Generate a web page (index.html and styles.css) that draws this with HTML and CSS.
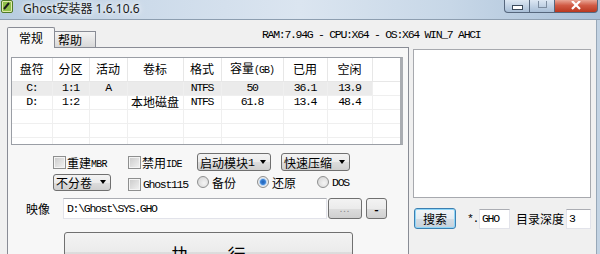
FILE: index.html
```html
<!DOCTYPE html>
<html lang="zh-CN">
  <head>
    <meta charset="UTF-8" />
    <title>Ghost安装器 1.6.10.6</title>
    <link rel="stylesheet" href="styles.css">
  </head>
  <body>
    <!-- Barre de titre -->
    <div class="titlebar">
      <svg class="app-icon" viewBox="0 0 14 14">
        <rect x="1.5" y="0.5" width="11" height="12" rx="1.5" fill="#dfeaa8" stroke="#4f7a28" />
        <rect x="3" y="2" width="8" height="9" fill="#8fc04a" />
        <path d="M4 9 L9 3" stroke="#1d1d1d" stroke-width="2" />
      </svg>
      <span class="title">Ghost安装器 1.6.10.6</span>
      <div class="caption">
        <span class="cap cap-min"><i class="min-glyph"></i></span>
        <span class="cap cap-max"><i class="max-glyph"></i></span>
        <span class="cap cap-close">
          <svg viewBox="0 0 12 9" class="close-glyph">
            <path d="M2 0 L10 8 M10 0 L2 8" stroke="#fff" stroke-width="2.2" />
          </svg>
        </span>
      </div>
    </div>

    <div class="client">
      <!-- Onglets -->
      <div class="tabstrip">
        <span class="tab active">常规</span>
        <span class="tab idle">帮助</span>
        <span class="sysinfo mono">RAM:7.94G - CPU:X64 - OS:X64 WIN_7 AHCI</span>
      </div>

      <div class="main">
        <div class="panel">
          <!-- Liste des partitions -->
          <div class="listview">
            <table class="disks">
              <colgroup>
                <col style="width: 40px" />
                <col style="width: 37px" />
                <col style="width: 38px" />
                <col style="width: 56px" />
                <col style="width: 38px" />
                <col style="width: 62px" />
                <col style="width: 44px" />
                <col style="width: 45px" />
                <col style="width: 28px" />
              </colgroup>
              <tr class="head">
                <th>盘符</th>
                <th>分区</th>
                <th>活动</th>
                <th>卷标</th>
                <th>格式</th>
                <th>容量<span class="mono small">(GB)</span></th>
                <th>已用</th>
                <th>空闲</th>
                <th></th>
              </tr>
              <tr class="sel mono">
                <td>C:</td>
                <td>1:1</td>
                <td>A</td>
                <td></td>
                <td>NTFS</td>
                <td>50</td>
                <td>36.1</td>
                <td>13.9</td>
                <td></td>
              </tr>
              <tr class="mono">
                <td>D:</td>
                <td>1:2</td>
                <td></td>
                <td class="cjk">本地磁盘</td>
                <td>NTFS</td>
                <td>61.8</td>
                <td>13.4</td>
                <td>48.4</td>
                <td></td>
              </tr>
              <tr><td></td><td></td><td></td><td></td><td></td><td></td><td></td><td></td><td></td></tr>
              <tr><td></td><td></td><td></td><td></td><td></td><td></td><td></td><td></td><td></td></tr>
              <tr><td></td><td></td><td></td><td></td><td></td><td></td><td></td><td></td><td></td></tr>
            </table>
          </div>

          <!-- Options -->
          <div class="options">
            <label class="opt"><i class="check"></i><span>重建</span><span class="mono tiny">MBR</span></label>
            <label class="opt"><i class="check"></i><span>禁用</span><span class="mono tiny">IDE</span></label>
            <div class="combos">
              <span class="combo w-boot">启动模块<span class="mono">1</span></span>
              <span class="combo w-zip">快速压缩</span>
            </div>

            <span class="combo w-split">不分卷</span>
            <label class="opt g115"><i class="check"></i><span class="mono">Ghost115</span></label>
            <div class="radios">
              <label class="opt"><i class="radio"></i>备份</label>
              <label class="opt"><i class="radio on"></i>还原</label>
              <label class="opt"><i class="radio"></i><span class="mono">DOS</span></label>
            </div>
          </div>

          <div class="image-row">
            <span class="img-label">映像</span>
            <span class="edit path mono">D:\Ghost\SYS.GHO</span>
            <button class="btn browse">...</button>
            <button class="btn minus">-</button>
          </div>

          <button class="btn run"><span>执</span><span>行</span></button>
        </div>

        <!-- Recherche -->
        <div class="side">
          <div class="results"></div>
          <div class="search-row">
            <button class="btn search">搜索</button>
            <span class="mask mono">*.</span>
            <span class="edit ext mono">GHO</span>
            <span class="depth-label">目录深度</span>
            <span class="edit depth mono">3</span>
          </div>
        </div>
      </div>
    </div>
  </body>
</html>
```

FILE: styles.css
```css
* {
  margin: 0;
  padding: 0;
  box-sizing: border-box;
}

body {
  width: 600px;
  height: 254px;
  overflow: hidden;
  background-color: #c3d3e3;
  font-family: "Noto Sans CJK SC", sans-serif;
  font-size: 12px;
  color: #000;
}

.mono {
  font-family: "Liberation Mono", "Noto Sans CJK SC", monospace;
  font-size: 11.5px;
  letter-spacing: -1.3px;
}

.mono.small {
  font-size: 10px;
  letter-spacing: -1px;
}

.mono.tiny {
  font-size: 10px;
  letter-spacing: -0.8px;
  line-height: 12px;
  margin-top: 6px;
}

/* Barre de titre */
.titlebar {
  display: flex;
  align-items: flex-start;
  height: 20px;
  background: linear-gradient(90deg, #b7cce0 0%, #cddbea 25%, #dbe5f0 50%, #c7d7e7 75%, #a9c0d8 100%);
  border-bottom: 1px solid #8d9eb0;
}

.app-icon {
  width: 14px;
  height: 14px;
}

.title {
  margin: 1px 0 0 9px;
  font-family: "Noto Sans", "Noto Sans CJK SC", sans-serif;
  font-size: 12px;
  line-height: 16px;
  color: #1a1a1a;
  text-shadow: 0 0 4px #fff, 0 0 8px #fff;
}

.caption {
  display: flex;
  margin-left: auto;
  margin-right: 2px;
}

.cap {
  display: flex;
  align-items: center;
  justify-content: center;
  height: 13px;
  border: 1px solid #56677d;
  border-top: none;
  background: linear-gradient(#dde7f3, #bfd0e3 55%, #a9bfd7);
}

.cap-min {
  width: 26px;
  border-radius: 0 0 0 4px;
}

.cap-max {
  width: 25px;
  border-left: none;
}

.cap-close {
  width: 43px;
  border-left: none;
  border-radius: 0 0 4px 0;
  background: linear-gradient(#e9a696, #d15b45 45%, #b9371f);
}

.min-glyph {
  width: 11px;
  height: 5px;
  margin-top: 3px;
  border: 1px solid #3b4a5c;
  background-color: #fff;
}

.max-glyph {
  width: 9px;
  height: 7px;
  margin-top: -3px;
  border: 1px solid #7d8da0;
  border-top: none;
}

.close-glyph {
  width: 12px;
  height: 9px;
  margin-top: -2px;
}

/* Zone client */
.client {
  width: 597px;
  height: 234px;
  padding-left: 7px;
  background-color: #f0f0f0;
  border-right: 1px solid #98a8b8;
}

.tabstrip {
  display: flex;
  align-items: flex-end;
  height: 27px;
}

.tab {
  border: 1px solid #898c95;
  border-bottom: none;
  line-height: 14px;
}

.tab.active {
  position: relative;
  z-index: 1;
  width: 48px;
  height: 21px;
  margin-bottom: -1px;
  padding-top: 3px;
  text-align: center;
  background-color: #f7f7f7;
  border-radius: 2px 2px 0 0;
}

.tab.idle {
  width: 41px;
  height: 16px;
  padding: 1px 0 0 3px;
  border-left: none;
  background: linear-gradient(#f4f4f4, #e6e6e6 50%, #d8d8d8);
}

.sysinfo {
  align-self: flex-start;
  margin: 8px 0 0 166px;
  line-height: 13px;
  white-space: nowrap;
}

.main {
  display: flex;
  align-items: flex-start;
}

.panel {
  width: 402px;
  height: 210px;
  padding: 9px 4px 0 3px;
  background-color: #f7f7f7;
  border: 1px solid #898c95;
  border-bottom: none;
}

/* Liste */
.listview {
  width: 392px;
  height: 88px;
  overflow: hidden;
  background-color: #fff;
  border: 1px solid #9a9ea5;
  border-right: 3px solid #a9acb1;
}

.disks {
  width: 388px;
  table-layout: fixed;
  border-collapse: collapse;
}

.disks th {
  height: 23px;
  font-weight: normal;
  line-height: 14px;
  border-right: 1px solid #e7e7e7;
  border-bottom: 1px solid #e7e7e7;
}

.disks td {
  height: 14px;
  padding: 0;
  line-height: 12px;
  text-align: center;
  white-space: nowrap;
  border-right: 1px solid #efefef;
  border-bottom: 1px solid #efefef;
}

.disks td.cjk {
  font-family: "Noto Sans CJK SC", sans-serif;
  font-size: 12px;
  letter-spacing: 0;
}

.disks .sel td:not(:last-child) {
  background-color: #ebebeb;
}

/* Options */
.options {
  display: grid;
  grid-template-columns: 75px 69px auto;
  grid-auto-rows: 18px;
  row-gap: 2px;
  align-items: center;
  margin: 8px 0 0 42px;
}

.opt {
  display: flex;
  align-items: center;
  white-space: nowrap;
}

.check {
  width: 13px;
  height: 13px;
  margin-right: 1px;
  border: 1px solid #8e8f8f;
  background: linear-gradient(135deg, #c9c9c9, #f3f3f3);
  box-shadow: inset 0 0 0 1px #f4f4f4;
}

.g115 {
  margin-top: 4px;
}

.g115 .check {
  margin-right: 2px;
}

.combos {
  display: flex;
  gap: 10px;
}

.combo {
  display: flex;
  align-items: center;
  height: 18px;
  padding-left: 2px;
  white-space: nowrap;
  border: 1px solid #707070;
  border-radius: 3px;
  background: linear-gradient(#f3f3f3, #ebebeb 50%, #dddddd 51%, #cfcfcf);
}

.combo::after {
  content: "";
  margin: 0 4px 0 auto;
  border-left: 3px solid transparent;
  border-right: 3px solid transparent;
  border-top: 4px solid #000;
}

.w-boot {
  width: 74px;
}

.w-zip {
  width: 69px;
}

.w-split {
  width: 58px;
  height: 17px;
}

.radios {
  display: flex;
  gap: 21px;
}

.radio {
  width: 12px;
  height: 12px;
  margin-right: 3px;
  border-radius: 50%;
  border: 1px solid #8e8f8f;
  background: radial-gradient(circle at 60% 60%, #f4f4f4, #d0d0d0);
}

.radio.on {
  background: radial-gradient(circle, #1f5fb4 0, #3c84d8 2.5px, #bcd6f2 3.5px, #eeeeee 4.5px, #d4d4d4 6px);
}

/* Image */
.image-row {
  display: flex;
  align-items: center;
  height: 21px;
  margin: 7px 0 0 15px;
}

.img-label {
  width: 24px;
  margin-right: 13px;
}

.edit {
  display: flex;
  align-items: center;
  background-color: #fff;
  border: 1px solid #e2e3ea;
  border-top-color: #abadb3;
  white-space: nowrap;
}

.path {
  width: 264px;
  height: 21px;
  padding-left: 3px;
}

.btn {
  font-family: inherit;
  font-size: 12px;
  color: #000;
  border: 1px solid #707070;
  border-radius: 3px;
  background: linear-gradient(#f3f3f3, #ebebeb 50%, #dddddd 51%, #cfcfcf);
}

.browse {
  width: 34px;
  height: 21px;
  margin-left: 1px;
  color: #8a8a8a;
  font-size: 9px;
  letter-spacing: 1px;
}

.minus {
  width: 21px;
  height: 21px;
  margin-left: 4px;
  font-weight: bold;
}

.run {
  display: flex;
  align-items: flex-start;
  justify-content: center;
  gap: 38px;
  width: 289px;
  height: 40px;
  margin: 13px 0 0 53px;
  padding-top: 9px;
  font-size: 18px;
  line-height: 24px;
}

/* Recherche */
.side {
  width: 178px;
  margin-left: 4px;
}

.results {
  height: 149px;
  margin-top: 2px;
  background-color: #fff;
  border: 1px solid #a7a9ae;
}

.search-row {
  display: flex;
  align-items: center;
  height: 21px;
  margin-top: 10px;
}

.search {
  width: 42px;
  height: 21px;
  margin-left: 1px;
  border-color: #3c7fb1;
  box-shadow: inset 0 0 0 1px #8ed6f8;
  background: linear-gradient(#f1f5f8, #e4ecf2 50%, #d4dde5 51%, #c6d1db);
}

.mask {
  margin-left: 11px;
  width: 12px;
}

.ext {
  width: 31px;
  height: 20px;
  padding-left: 2px;
}

.depth-label {
  margin-left: 6px;
  width: 48px;
}

.depth {
  width: 25px;
  height: 20px;
  margin-left: 2px;
  padding-left: 2px;
}
```
